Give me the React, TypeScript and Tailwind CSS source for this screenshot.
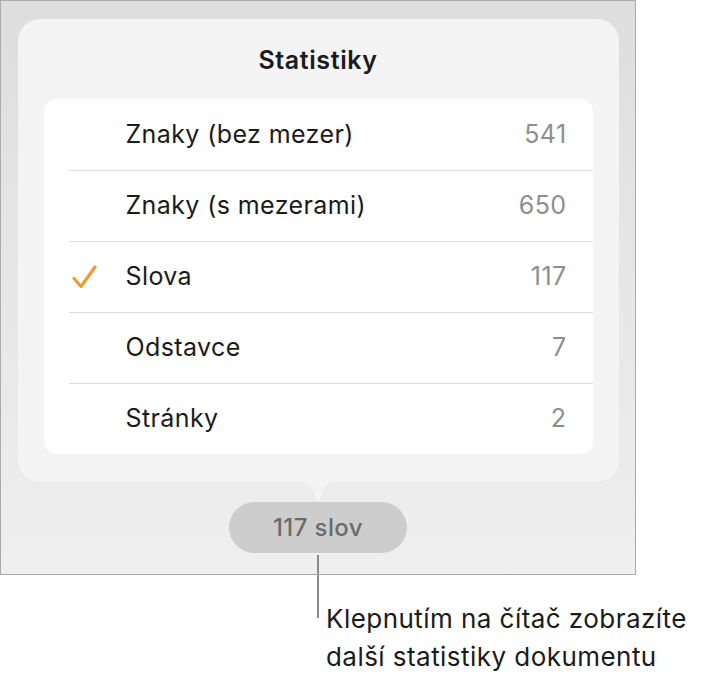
import { Fragment } from "react";

const stats = [
  { label: "Znaky (bez mezer)", value: "541" },
  { label: "Znaky (s mezerami)", value: "650" },
  { label: "Slova", value: "117", checked: true },
  { label: "Odstavce", value: "7" },
  { label: "Stránky", value: "2" },
];

function Check() {
  return (
    <svg width="25" height="24" viewBox="0 0 25 24" fill="none">
      <path
        d="M2 13.5 L9 21.5 L23 2"
        stroke="#f29b31"
        strokeWidth="3.2"
        strokeLinecap="round"
        strokeLinejoin="round"
      />
    </svg>
  );
}

export default function App() {
  return (
    <div className="min-h-screen bg-white font-['Inter',sans-serif] text-[#1b1b1b]">
      {/* Device frame */}
      <div className="flex w-[636px] flex-col items-center border border-[#ababab] bg-gradient-to-b from-[#dedede] to-[#efefef] pt-[18px]">
        {/* Popover */}
        <div className="flex w-[601px] flex-col rounded-[22px] bg-[#f4f4f4] px-[26px] pb-[28px]">
          <div className="flex h-[80px] items-center justify-center pt-[3px] text-[25px] font-semibold tracking-[0.6px]">
            Statistiky
          </div>
          <div className="rounded-[13px] bg-white">
            {stats.map((s, i) => (
              <div key={s.label} className="flex h-[71px] pl-[25px]">
                <div
                  className={
                    i === 0
                      ? "flex flex-1 items-center pr-[26px]"
                      : "flex flex-1 items-center border-t border-[#dcdcdc] pr-[26px]"
                  }
                >
                  <div className="flex w-[57px] items-center pl-[3px]">
                    {s.checked ? <Check /> : <Fragment />}
                  </div>
                  <span className="flex-1 text-[25px] tracking-[0.4px]">{s.label}</span>
                  <span className="text-[25px] tracking-[0.4px] text-[#8e8e8e]">{s.value}</span>
                </div>
              </div>
            ))}
          </div>
        </div>

        {/* Arrow */}
        <svg width="40" height="20" viewBox="0 0 40 20" className="block">
          <path
            d="M0 0 C8 0 11 2 14 7 L18.5 17.5 Q20 20 21.5 17.5 L26 7 C29 2 32 0 40 0 Z"
            fill="#f4f4f4"
          />
        </svg>

        {/* Counter button */}
        <div className="flex h-[51px] w-[178px] items-center justify-center rounded-full bg-[#cdcdcd] text-[24px] font-medium tracking-[0.4px] text-[#6b6b6b]">
          117 slov
        </div>
        <div className="mt-[2px] h-[19px] w-[2px] bg-[#8a8a8a]" />
      </div>

      {/* Callout */}
      <div className="flex pl-[317px]">
        <div className="h-[43px] w-[2px] bg-[#8a8a8a]" />
        <div className="ml-[7px] mt-[25px] text-[26px] leading-[38px] tracking-[0.45px]">
          Klepnutím na čítač zobrazíte
          <br />
          další statistiky dokumentu
        </div>
      </div>
    </div>
  );
}
